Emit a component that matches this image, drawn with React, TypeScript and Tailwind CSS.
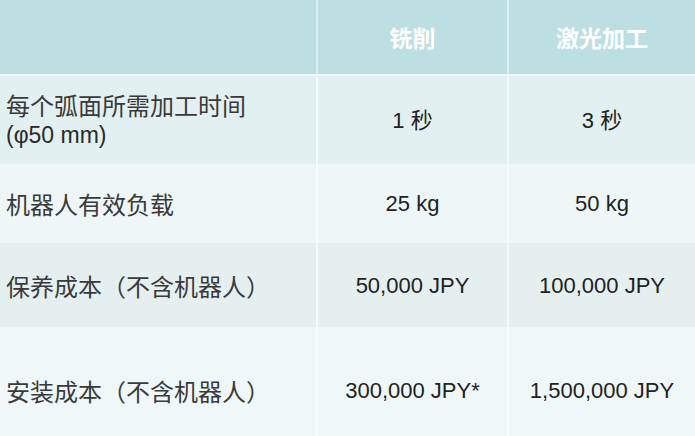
const rows = [
  { label: ['每个弧面所需加工时间', '(φ50 mm)'], a: '1 秒', b: '3 秒', bg: 'bg-[#e3f0f1]', h: 'h-[88px]' },
  { label: ['机器人有效负载'], a: '25 kg', b: '50 kg', bg: 'bg-[#eef6f7]', h: 'h-[79px]' },
  { label: ['保养成本（不含机器人）'], a: '50,000 JPY', b: '100,000 JPY', bg: 'bg-[#e5eff0]', h: 'h-[84px]' },
  { label: ['安装成本（不含机器人）'], a: '300,000 JPY*', b: '1,500,000 JPY', bg: 'bg-[#eff7f9]', h: 'h-[126px]' },
]

const cjk = { fontFamily: '"Noto Sans CJK SC", sans-serif' }

export default function App() {
  return (
    <div className="w-[695px] h-[436px] overflow-hidden bg-white text-[#222]" style={{ fontFamily: '"Liberation Sans", "Noto Sans CJK SC", sans-serif' }}>
      <div className="grid grid-cols-[318px_191px_186px] h-[76px] bg-[#bddfe2] border-b-2 border-white/80">
        <div className="border-r-2 border-white/50" />
        <div className="flex items-center justify-center border-r-2 border-white/50 text-white text-[23px] font-bold" style={cjk}>
          铣削
        </div>
        <div className="flex items-center justify-center text-white text-[23px] font-bold" style={cjk}>
          激光加工
        </div>
      </div>
      {rows.map((r, i) => (
        <div key={i} className={`grid grid-cols-[318px_191px_186px] ${r.h} ${r.bg}`}>
          <div className="flex flex-col justify-center pl-[6px] border-r-2 border-white/60 leading-[31px]">
            <span className="text-[24px] text-[#3a3a3a]" style={{ fontFamily: '"Noto Sans CJK SC", serif' }}>
              {r.label[0]}
            </span>
            {r.label[1] && <span className="text-[23px] text-[#2a2a2a]">{r.label[1]}</span>}
          </div>
          <div className="flex items-center justify-center border-r-2 border-white/60 text-[22px]">{r.a}</div>
          <div className="flex items-center justify-center text-[22px]">{r.b}</div>
        </div>
      ))}
    </div>
  )
}
